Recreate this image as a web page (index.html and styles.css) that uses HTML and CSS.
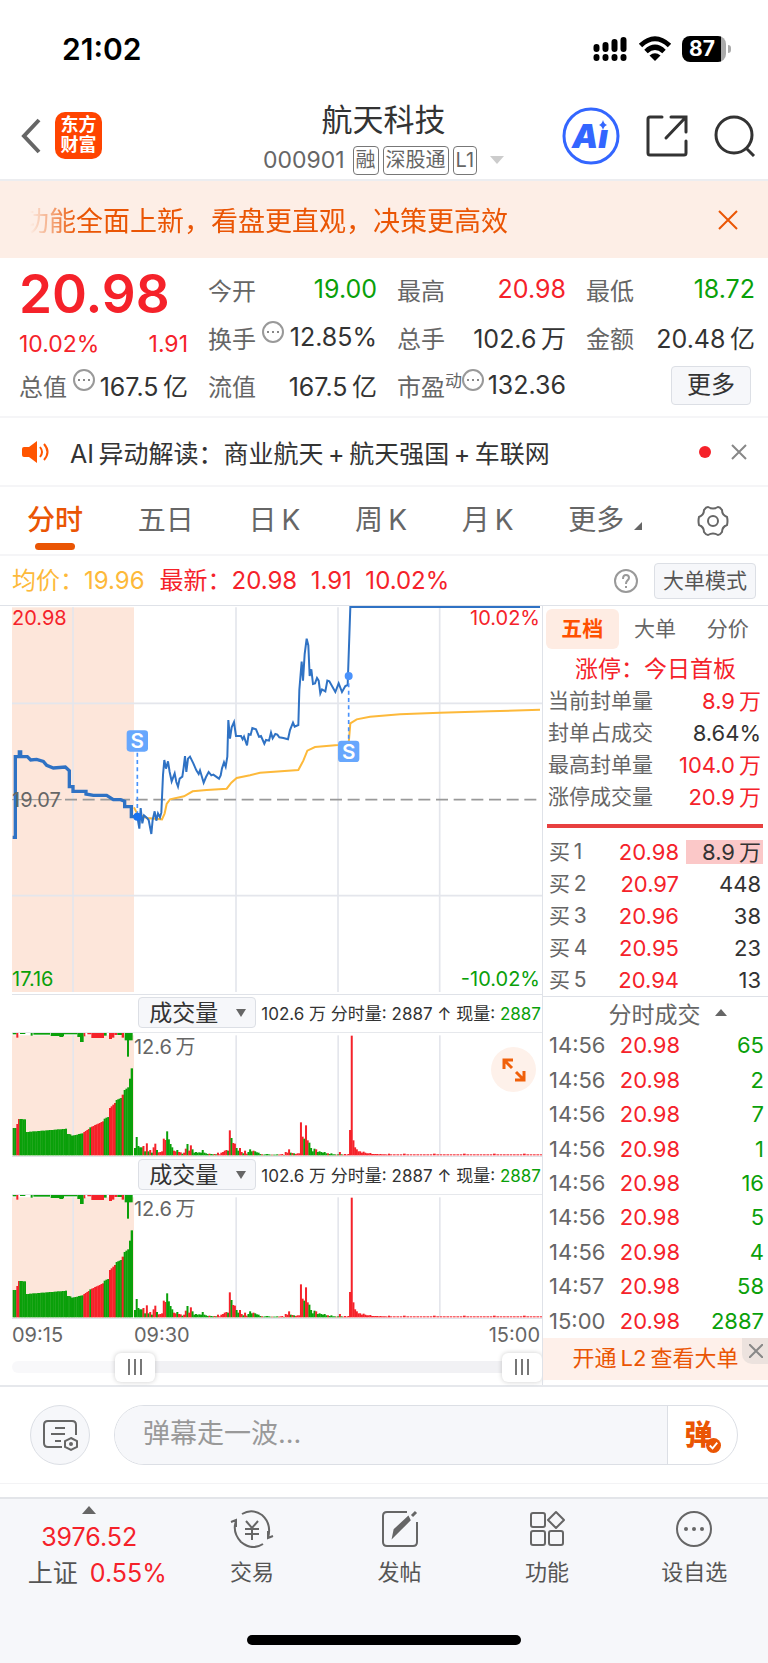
FILE: index.html
```
<!DOCTYPE html>
<html lang="zh-CN">
<head>
    <title>航天科技 000901</title>
    <meta charset="UTF-8">
    <meta name="viewport" content="width=device-width, initial-scale=1.0">
    <link rel="stylesheet" href="styles.css">
</head>
<body>
    <div class="status-bar">
        <span class="clock">21:02</span>
        <div class="status-icons">
            <svg width="35" height="26" viewBox="0 0 35 26">
                <g stroke="#000" stroke-width="6" stroke-linecap="round">
                    <path d="M3.500 11v2M12.500 9v4M21.500 6v7M30.500 4v9"/>
                    <path d="M3.500 21v1M12.500 21v1M21.500 21v1M30.500 21v1"/>
                </g>
            </svg>
            <svg width="34" height="26" viewBox="0 0 34 26">
                <g fill="none" stroke="#000" stroke-width="5">
                    <path d="M2.500 9.500Q17-4 31.500 9.500"/>
                    <path d="M8 15.500Q17 7 26 15.500"/>
                </g>
                <path d="M17 25l-5.500-5.500Q17 15 22.500 19.500z"/>
            </svg>
            <div class="battery">87</div>
        </div>
    </div>

    <header class="header">
        <a href="#" class="back" aria-label="返回">
            <svg width="20" height="36" viewBox="0 0 20 36"><path d="M18 2L3 18l15 16" fill="none" stroke="#666" stroke-width="4"/></svg>
        </a>
        <a href="#" class="logo">东方<br>财富</a>
        <div class="title">
            <h1>航天科技</h1>
            <div class="subtitle">
                <span class="code">000901</span>
                <span class="tag">融</span>
                <span class="tag">深股通</span>
                <span class="tag">L1</span>
                <svg class="caret" width="14" height="8" viewBox="0 0 14 8"><path d="M0 0h14L7 8z" fill="#ccc"/></svg>
            </div>
        </div>
        <button class="icon-btn" aria-label="AI">
            <svg width="58" height="58" viewBox="0 0 58 58">
                <circle cx="29" cy="29" r="27" fill="none" stroke="#3366ff" stroke-width="3"/>
                <text class="ai-mark" x="10" y="41">Aı</text>
                <path d="M41 13q1 4 4 5q-3 1-4 5q-1-4-4-5q3-1 4-5z" fill="#3366ff"/>
            </svg>
        </button>
        <button class="icon-btn" aria-label="分享">
            <svg width="42" height="42" viewBox="0 0 42 42">
                <path d="M16 2H4q-2 0-2 2v34q0 2 2 2h34q2 0 2-2V26M25 2h15v15M39 3L20 23" fill="none" stroke="#333" stroke-width="3" stroke-linecap="round"/>
            </svg>
        </button>
        <button class="icon-btn" aria-label="搜索">
            <svg width="42" height="42" viewBox="0 0 42 42">
                <circle cx="20" cy="20" r="18" fill="none" stroke="#333" stroke-width="3"/>
                <path d="M32 33l8 8" stroke="#333" stroke-width="3"/>
            </svg>
        </button>
    </header>

    <div class="notice">
        <p class="notice-text">功能全面上新，看盘更直观，决策更高效</p>
        <button class="close" aria-label="关闭">
            <svg width="20" height="20" viewBox="0 0 20 20"><path d="M1 1l18 18M19 1L1 19" stroke="#ea5504" stroke-width="2"/></svg>
        </button>
    </div>

    <section class="quote">
        <div class="quote-main">
            <strong class="price">20.98</strong>
            <div class="change"><span>10.02%</span><span>1.91</span></div>
        </div>
        <div class="stat"><span>今开</span><b class="down">19.00</b></div>
        <div class="stat"><span>最高</span><b class="up">20.98</b></div>
        <div class="stat"><span>最低</span><b class="down">18.72</b></div>
        <div class="stat"><span>换手</span><svg class="info" width="22" height="22" viewBox="0 0 22 22"><use href="#dots"/></svg><b>12.85%</b></div>
        <div class="stat"><span>总手</span><b>102.6&thinsp;万</b></div>
        <div class="stat"><span>金额</span><b>20.48&thinsp;亿</b></div>
        <div class="stat"><span>总值</span><svg class="info" width="22" height="22" viewBox="0 0 22 22"><use href="#dots"/></svg><b>167.5&thinsp;亿</b></div>
        <div class="stat"><span>流值</span><b>167.5&thinsp;亿</b></div>
        <div class="stat"><span>市盈<sup>动</sup></span><svg class="info tight" width="22" height="22" viewBox="0 0 22 22"><use href="#dots"/></svg><b>132.36</b></div>
        <div class="stat stat-more"><button class="btn more-btn">更多</button></div>
    </section>

    <div class="ai-news">
        <svg width="28" height="24" viewBox="0 0 28 24">
            <path d="M2 7h5l8-6v22l-8-6H2q-2 0-2-2V9q0-2 2-2z" fill="#ff5500"/>
            <path d="M18 7q4 5 0 10M22 4q7 8 0 16" fill="none" stroke="#ff5500" stroke-width="2"/>
        </svg>
        <a href="#" class="ai-text">AI&thinsp;异动解读：商业航天&thinsp;+&thinsp;航天强国&thinsp;+&thinsp;车联网</a>
        <i class="dot"></i>
        <button class="close" aria-label="关闭">
            <svg width="16" height="16" viewBox="0 0 16 16"><path d="M1 1l14 14M15 1L1 15" stroke="#888" stroke-width="2"/></svg>
        </button>
    </div>

    <nav class="tabs">
        <a href="#" class="active">分时</a>
        <a href="#">五日</a>
        <a href="#">日&thinsp;K</a>
        <a href="#">周&thinsp;K</a>
        <a href="#">月&thinsp;K</a>
        <a href="#" class="tab-more">更多</a>
        <button class="icon-btn" aria-label="设置">
            <svg width="32" height="32" viewBox="0 0 32 32" fill="none" stroke="#666" stroke-width="2">
                <path d="M11 2q5 3 10 0q2 0 4 3q0 5 5 7q1 4 0 8q-5 2-5 7q-2 3-4 3q-5-3-10 0q-2 0-4-3q0-5-5-7q-1-4 0-8q5-2 5-7q2-3 4-3z"/>
                <circle cx="16" cy="16" r="5"/>
            </svg>
        </button>
    </nav>

    <div class="chart-head">
        <span class="avg">均价：19.96</span>
        <span class="up">最新：20.98&nbsp; 1.91&nbsp; 10.02%</span>
        <svg class="help" width="26" height="26" viewBox="0 0 26 26" fill="none" stroke="#999" stroke-width="2">
            <circle cx="13" cy="13" r="11"/>
            <path d="M10 11q0-4 3-4t3 3q0 1-2 3q-1 1-1 3M13 18v2"/>
        </svg>
        <button class="btn mode-btn">大单模式</button>
    </div>

    <main class="board">
        <div class="charts">
            <div class="plot">
                <svg class="price-chart" viewBox="36 48 1590 1164">
                    <rect x="36" y="52" width="366" height="1154" fill="#fde6da"/>
                    <g stroke="#e4e6ec" stroke-width="5">
                        <path d="M36 340H1626M36 917H1626"/>
                        <path d="M219 52V1206M708 52V1206M1014 52V1206M1319 52V1206"/>
                    </g>
                    <path d="M195 629H1620" stroke="#999" stroke-width="5" stroke-dasharray="36 17"/>
                    <path d="M36 629H185" stroke="#999" stroke-width="3"/>
                    <path d="M402 652L412 672L440 684L486 688L494 670L500 642L510 628L552 619L578 604L620 600L680 596L694 578L710 564L750 556L780 548L895 540L910 512L922 482L945 471L1014 465L1046 460L1051 400L1070 388L1110 380L1200 373L1319 368L1470 364L1620 359" fill="none" stroke="#fdb93a" stroke-width="6"/>
                    <path d="M38 742H46V500H58V486H62V500H82L92 510L110 508L130 514L140 526L160 534L196 531L208 542V590H219V604H258V612L280 616H320L340 629H362L374 634V650H394V680H412" fill="none" stroke="#2f72c4" stroke-width="10"/>
                    <path d="M412 680L418 716L422 654L427 700L432 676L441 684L446 690L454 732L458 690L464 664L469 692L474 670L480 682L484 668L489 555L493 510L498 536L504 514L509 546L515 574L524 550L529 576L534 590L539 566L547 560L551 532L555 498L559 546L564 506L570 500L580 520L589 541L596 552L600 541L611 578L618 561L626 546L634 556L640 554L657 566L662 556L666 535L672 517L677 530L682 500L685 390L690 446L695 412L702 396L708 438L723 438L728 448L732 440L741 466L746 432L752 434L757 414L768 418L777 440L783 438L793 461L798 450L807 452L813 428L818 445L826 432L832 434L838 442L850 444L864 448L870 420L879 398L884 410L895 405L898 300L905 215L909 272L914 192L920 146L925 166L929 258L934 238L939 282L945 280L951 264L956 272L961 310L966 298L976 304L982 272L988 274L1006 306L1016 280L1026 306L1036 288L1043 285L1051 51H1620" fill="none" stroke="#2f72c4" stroke-width="6"/>
                    <path d="M412 488V680M1046 258V455" stroke="#4a92fb" stroke-width="5" stroke-dasharray="12 10"/>
                    <circle cx="412" cy="680" r="12" fill="#1a73f0"/>
                    <circle cx="1046" cy="258" r="12" fill="#4a92fb"/>
                    <rect x="380" y="421" width="64" height="64" rx="10" fill="#67a7fd"/>
                    <rect x="1014" y="452" width="64" height="64" rx="10" fill="#67a7fd"/>
                    <g class="mark"><text x="412" y="475">S</text><text x="1046" y="506">S</text></g>
                </svg>
                <span class="label top-left up">20.98</span>
                <span class="label top-right up">10.02%</span>
                <span class="label mid-left">19.07</span>
                <span class="label bottom-left down">17.16</span>
                <span class="label bottom-right down">-10.02%</span>
            </div>

            <div class="vol-head">
                <div class="select"><select aria-label="副图指标一"><option>成交量</option></select></div>
                <span>102.6 万 分时量: 2887 ↑ 现量: <em class="down">2887</em></span>
            </div>
            <div class="plot vol">
                <svg class="vol-chart" viewBox="36 128 1590 369"></svg>
                <span class="label vol-max">12.6&thinsp;万</span>
                <button class="expand" aria-label="放大">
                    <svg width="24" height="24" viewBox="0 0 24 24" fill="none" stroke="#f0600a" stroke-width="3">
                        <path d="M2 11V2h9M2 2l8 8M22 13v9h-9M22 22l-8-8"/>
                    </svg>
                </button>
            </div>

            <div class="vol-head">
                <div class="select"><select aria-label="副图指标二"><option>成交量</option></select></div>
                <span>102.6 万 分时量: 2887 ↑ 现量: <em class="down">2887</em></span>
            </div>
            <div class="plot vol">
                <svg class="vol-chart" viewBox="36 128 1590 369"></svg>
                <span class="label vol-max">12.6&thinsp;万</span>
            </div>

            <div class="times"><span class="t-open">09:15</span><span>09:30</span><span class="t-close">15:00</span></div>
            <div class="range">
                <input type="range" min="0" max="100" value="21" aria-label="开始时间">
                <input type="range" min="0" max="100" value="100" aria-label="结束时间">
            </div>
        </div>

        <aside class="panel">
            <div class="panel-tabs">
                <button class="active">五档</button>
                <button>大单</button>
                <button>分价</button>
            </div>
            <p class="limit">涨停：今日首板</p>
            <dl class="seal">
                <div><dt>当前封单量</dt><dd class="up">8.9&thinsp;万</dd></div>
                <div><dt>封单占成交</dt><dd>8.64%</dd></div>
                <div><dt>最高封单量</dt><dd class="up">104.0&thinsp;万</dd></div>
                <div><dt>涨停成交量</dt><dd class="up">20.9&thinsp;万</dd></div>
            </dl>
            <table class="bids">
                <tr><th>买&thinsp;1</th><td class="up">20.98</td><td><span class="hit">8.9&thinsp;万</span></td></tr>
                <tr><th>买&thinsp;2</th><td class="up">20.97</td><td>448</td></tr>
                <tr><th>买&thinsp;3</th><td class="up">20.96</td><td>38</td></tr>
                <tr><th>买&thinsp;4</th><td class="up">20.95</td><td>23</td></tr>
                <tr><th>买&thinsp;5</th><td class="up">20.94</td><td>13</td></tr>
            </table>
            <button class="deals-title">分时成交
                <svg width="12" height="7" viewBox="0 0 12 7"><path d="M0 7h12L6 0z" fill="#666"/></svg>
            </button>
            <table class="deals">
                <tr><th>14:56</th><td class="up">20.98</td><td class="down">65</td></tr>
                <tr><th>14:56</th><td class="up">20.98</td><td class="down">2</td></tr>
                <tr><th>14:56</th><td class="up">20.98</td><td class="down">7</td></tr>
                <tr><th>14:56</th><td class="up">20.98</td><td class="down">1</td></tr>
                <tr><th>14:56</th><td class="up">20.98</td><td class="down">16</td></tr>
                <tr><th>14:56</th><td class="up">20.98</td><td class="down">5</td></tr>
                <tr><th>14:56</th><td class="up">20.98</td><td class="down">4</td></tr>
                <tr><th>14:57</th><td class="up">20.98</td><td class="down">58</td></tr>
                <tr><th>15:00</th><td class="up">20.98</td><td class="down">2887</td></tr>
            </table>
            <div class="l2">
                <a href="#">开通&thinsp;L2&thinsp;查看大单</a>
                <button class="l2-close" aria-label="关闭">
                    <svg width="14" height="14" viewBox="0 0 14 14"><path d="M0 0l14 14M14 0L0 14" stroke="#888" stroke-width="2"/></svg>
                </button>
            </div>
        </aside>
    </main>

    <form class="comment">
        <button type="button" class="round-btn" aria-label="弹幕设置">
            <svg width="36" height="33" viewBox="0 0 36 33" fill="none" stroke="#666" stroke-width="2">
                <path d="M20 28H6q-4 0-4-4V6q0-4 4-4h24q4 0 4 4v10"/>
                <path d="M13 9h10M9 15h14M13 22h6"/>
                <path d="M29 19l6 3v6l-6 3l-6-3v-6z"/>
                <circle cx="29" cy="25" r="1"/>
            </svg>
        </button>
        <div class="comment-box">
            <input type="text" placeholder="弹幕走一波..." aria-label="弹幕">
            <button type="button" class="danmu">弹
                <svg width="15" height="15" viewBox="0 0 16 16"><circle cx="8" cy="8" r="8" fill="#ea5504"/><path d="M4 8l3 3l5-6" fill="none" stroke="#fff" stroke-width="2"/></svg>
            </button>
        </div>
    </form>

    <footer class="bottom-bar">
        <a href="#" class="index">
            <svg width="14" height="8" viewBox="0 0 14 8"><path d="M0 8h14L7 0z" fill="#666"/></svg>
            <span class="index-value up">3976.52</span>
            <span class="index-name">上证<em class="up">0.55%</em></span>
        </a>
        <a href="#">
            <svg width="44" height="38" viewBox="0 0 44 38" fill="none" stroke="#666" stroke-width="2">
                <path d="M12 4Q22-2 32 5Q42 14 38 28M33 34Q22 41 11 32Q2 22 6 11M1 12l5-2v7M43 26l-5 2v-7"/>
                <path d="M16 11l6 7l6-7M22 18v12M15 19h14M15 24h14"/>
            </svg>
            <span>交易</span>
        </a>
        <a href="#">
            <svg width="38" height="38" viewBox="0 0 38 38" fill="none" stroke="#666" stroke-width="2">
                <path d="M26 2H6Q2 2 2 6v26q0 4 4 4h26q4 0 4-4V12"/>
                <path d="M28 10L18 20l-5 5l1-5L27 8zM31 6l4-4" fill="#666" stroke-width="3"/>
            </svg>
            <span>发帖</span>
        </a>
        <a href="#">
            <svg width="36" height="38" viewBox="0 0 36 38" fill="none" stroke="#666" stroke-width="2">
                <rect x="2" y="3" width="14" height="14" rx="2"/>
                <rect x="2" y="21" width="14" height="14" rx="2"/>
                <rect x="20" y="21" width="14" height="14" rx="2"/>
                <path d="M27 2l8 8l-8 8l-8-8z" stroke-linejoin="round"/>
            </svg>
            <span>功能</span>
        </a>
        <a href="#">
            <svg width="38" height="38" viewBox="0 0 38 38">
                <circle cx="19" cy="19" r="17" fill="none" stroke="#666" stroke-width="2"/>
                <g fill="#666"><circle cx="11" cy="19" r="2"/><circle cx="19" cy="19" r="2"/><circle cx="27" cy="19" r="2"/></g>
            </svg>
            <span>设自选</span>
        </a>
        <div class="home-indicator"></div>
    </footer>

    <svg class="defs" width="0" height="0">
        <symbol id="dots" viewBox="0 0 22 22">
            <circle cx="11" cy="11" r="10" fill="none" stroke="#999" stroke-width="2"/>
            <path d="M5 10h2v2H5zM10 10h2v2h-2zM15 10h2v2h-2z" fill="#888"/>
        </symbol>
    </svg>
    <script src="chart.js"></script>
</body>
</html>
```
FILE: styles.css
```
* {
    box-sizing: border-box;
}

body {
    font-family: Inter, "Noto Sans CJK SC", sans-serif;
    margin: 0;
    color: #333;
    background-color: #fff;
}

button {
    font-family: inherit;
    color: inherit;
    padding: 0;
    border: none;
    background: none;
    cursor: pointer;
}

a {
    color: inherit;
    text-decoration: none;
}

svg {
    display: block;
    flex-shrink: 0;
}

em, i, b {
    font-style: normal;
    font-weight: 400;
}

.up {
    color: #f5222a;
}

.down {
    color: #0aa00a;
}

.defs {
    position: absolute;
}

.btn {
    background-color: #f6f7fa;
    border: 1px solid #dcdfe5;
    border-radius: 4px;
}

/* 状态栏 */
.status-bar {
    height: 90px;
    padding: 8px 42px 0 62px;
    display: flex;
    align-items: center;
    justify-content: space-between;
}

.clock {
    font-size: 30px;
    font-weight: 600;
    color: #000;
}

.status-icons {
    display: flex;
    align-items: center;
    gap: 10px;
}

.battery {
    position: relative;
    width: 44px;
    height: 26px;
    padding-right: 4px;
    border-radius: 8px;
    background: linear-gradient(90deg, #000 39px, #aaa 39px);
    color: #fff;
    font-size: 21px;
    font-weight: 700;
    line-height: 26px;
    text-align: center;
}

.battery::after {
    content: "";
    position: absolute;
    right: -5px;
    top: 9px;
    width: 3px;
    height: 8px;
    border-radius: 0 4px 4px 0;
    background-color: #aaa;
}

/* 标题栏 */
.header {
    height: 91px;
    padding: 2px 12px 0 21px;
    display: flex;
    align-items: center;
    border-bottom: 2px solid #ecedf0;
}

.logo {
    width: 47px;
    height: 47px;
    margin-left: 14px;
    padding-top: 3px;
    border-radius: 10px;
    background-color: #ff4400;
    color: #fff;
    font-size: 18px;
    font-weight: 700;
    line-height: 20px;
    text-align: center;
}

.title {
    flex: 1;
    padding: 3px 0 0 103px;
    display: flex;
    flex-direction: column;
    align-items: center;
}

.title h1 {
    margin: 0;
    font-size: 31px;
    font-weight: 400;
    line-height: 46px;
}

.subtitle {
    display: flex;
    align-items: center;
    gap: 4px;
    height: 35px;
    color: #666;
}

.code {
    font-size: 23px;
    margin-right: 4px;
}

.tag {
    height: 29px;
    padding: 0 2px;
    border: 1px solid #777;
    border-radius: 4px;
    font-size: 20px;
    line-height: 27px;
}

.caret {
    margin-left: 9px;
}

.ai-mark {
    fill: #3366ff;
    font-size: 33px;
    font-style: italic;
    font-weight: 900;
}

.header .icon-btn {
    margin-left: 26px;
}

.header .icon-btn:first-of-type {
    margin-left: 0;
}

/* 通知 */
.notice {
    height: 77px;
    padding: 0 30px 0 22px;
    display: flex;
    align-items: center;
    justify-content: space-between;
    background-color: #fdeee6;
}

.notice-text {
    margin: 0;
    font-size: 27px;
    color: #ea5504;
    mask-image: linear-gradient(90deg, transparent 8px, #000 54px);
}

/* 行情 */
.quote {
    display: grid;
    grid-template-columns: repeat(4, 1fr);
    grid-auto-rows: 48px;
    column-gap: 20px;
    padding: 7px 13px 7px 19px;
    border-bottom: 2px solid #f5f5f7;
}

.quote-main {
    grid-row: span 2;
    color: #f5222a;
}

.price {
    display: block;
    font-size: 53px;
    font-weight: 600;
    line-height: 58px;
}

.change {
    display: flex;
    justify-content: space-between;
    font-size: 23px;
    line-height: 42px;
}

.stat {
    display: flex;
    align-items: center;
    font-size: 24px;
    white-space: nowrap;
}

.stat span {
    color: #666;
}

.stat b {
    margin-left: auto;
    font-size: 25px;
}

.stat sup {
    font-size: 17px;
    line-height: 18px;
}

.info {
    margin: 0 0 10px 6px;
}

.info.tight {
    margin-left: 0;
}

.stat-more {
    justify-content: flex-end;
    padding-right: 4px;
}

.more-btn {
    width: 80px;
    height: 39px;
    font-size: 24px;
    line-height: 36px;
}

/* AI 解读 */
.ai-news {
    height: 69px;
    padding: 0 21px 0 22px;
    display: flex;
    align-items: center;
    border-bottom: 2px solid #f5f5f7;
}

.ai-text {
    flex: 1;
    margin-left: 20px;
    font-size: 25px;
}

.dot {
    width: 12px;
    height: 12px;
    margin-right: 20px;
    border-radius: 50%;
    background-color: #f5222a;
}

/* 周期 */
.tabs {
    height: 69px;
    padding: 0 39px 0 27px;
    display: flex;
    align-items: center;
    justify-content: space-between;
    border-bottom: 2px solid #f5f5f7;
    font-size: 28px;
    line-height: 67px;
    color: #666;
}

.tabs .active {
    position: relative;
    color: #ea5504;
    font-weight: 500;
}

.tabs .active::after {
    content: "";
    position: absolute;
    left: 50%;
    bottom: 4px;
    width: 40px;
    height: 7px;
    margin-left: -20px;
    border-radius: 4px;
    background-color: #ea5504;
}

.tab-more::after {
    content: "";
    display: inline-block;
    margin-left: 10px;
    border: 4px solid;
    border-color: transparent #666 #666 transparent;
}

.chart-head {
    height: 49px;
    padding: 0 12px;
    display: flex;
    align-items: center;
    gap: 15px;
    font-size: 24px;
    line-height: 46px;
    white-space: nowrap;
}

.avg {
    color: #fdb93a;
}

.help {
    margin-left: auto;
}

.mode-btn {
    width: 102px;
    height: 36px;
    font-size: 21px;
    line-height: 32px;
    color: #555;
}

/* 图表 */
.board {
    display: flex;
    border-top: 1px solid #dfe2e8;
    border-bottom: 2px solid #e6e8ec;
}

.charts {
    flex: 1;
    min-width: 0;
    padding-left: 12px;
}

.plot {
    position: relative;
    border-bottom: 1px solid #dfe2e8;
}

.plot svg {
    width: 100%;
}

.plot .expand svg {
    width: 24px;
}

.mark text {
    fill: #fff;
    font-size: 62px;
    font-weight: 600;
    text-anchor: middle;
}

.label {
    position: absolute;
    font-size: 20px;
    line-height: 24px;
}

.top-left {
    top: 0;
    left: 0;
}

.top-right {
    top: 0;
    right: 2px;
}

.mid-left {
    top: 50%;
    left: 0;
    margin-top: -12px;
    color: #666;
}

.bottom-left {
    bottom: 3px;
    left: 0;
}

.bottom-right {
    bottom: 3px;
    right: 2px;
}

.vol-max {
    top: 2px;
    left: 23%;
    color: #666;
}

.expand {
    position: absolute;
    top: 14px;
    right: 6px;
    width: 45px;
    height: 45px;
    display: flex;
    align-items: center;
    justify-content: center;
    border-radius: 50%;
    background-color: #fef1ea;
}

.vol-head {
    height: 38px;
    padding: 0 1px 2px 0;
    display: flex;
    align-items: center;
    justify-content: flex-end;
    gap: 5px;
    border-bottom: 1px solid #e6e8ec;
    font-size: 17px;
    white-space: nowrap;
}

.select {
    position: relative;
}

.select select {
    appearance: none;
    width: 118px;
    height: 31px;
    padding: 0 0 0 10px;
    background-color: #f6f7fa;
    border: 1px solid #dcdfe5;
    border-radius: 4px;
    font-family: inherit;
    font-size: 23px;
    color: #333;
}

.select::after {
    content: "";
    position: absolute;
    top: 12px;
    right: 10px;
    border: 5px solid transparent;
    border-top: 8px solid #666;
    border-bottom: none;
}

.times {
    display: flex;
    height: 32px;
    font-size: 20px;
    line-height: 32px;
    color: #666;
}

.t-open {
    width: 23%;
}

.t-close {
    margin-left: auto;
    padding-right: 2px;
}

.range {
    display: grid;
    height: 34px;
}

.range input {
    grid-area: 1 / 1;
    appearance: none;
    width: 100%;
    height: 32px;
    margin: 0;
    background: none;
    pointer-events: none;
}

.range input:first-child::-webkit-slider-runnable-track {
    height: 12px;
    border-radius: 6px;
    background: linear-gradient(90deg, #f8f8fa 23%, #f1f1f4 23%);
}

.range input::-webkit-slider-thumb {
    appearance: none;
    width: 40px;
    height: 29px;
    border-radius: 6px;
    box-shadow: 0 0 5px rgba(0, 0, 0, 0.2);
    background: repeating-linear-gradient(90deg, #777 0 2px, transparent 2px 6px) 13px 6px / 14px 16px no-repeat #fff;
    pointer-events: auto;
}

.range input:first-child::-webkit-slider-thumb {
    margin-top: -8px;
}

/* 盘口 */
.panel {
    width: 226px;
    display: flex;
    flex-direction: column;
    border-left: 1px solid #dfe2e8;
    font-size: 22px;
}

.panel-tabs {
    display: flex;
    padding: 3px 4px 4px 3px;
}

.panel-tabs button {
    flex: 1;
    height: 40px;
    border-radius: 6px;
    font-size: 21px;
    line-height: 36px;
    color: #666;
}

.panel-tabs .active {
    background-color: #feece3;
    color: #ff5000;
    font-weight: 700;
}

.limit {
    margin: 0;
    font-size: 23px;
    line-height: 32px;
    text-align: center;
    color: #f5222a;
}

.seal {
    margin: 0 5px 0 4px;
    padding-bottom: 11px;
    border-bottom: 4px solid #e84040;
}

.seal div {
    display: flex;
    justify-content: space-between;
    padding: 0 2px 0 1px;
    line-height: 32px;
}

.seal dt {
    font-size: 21px;
    color: #666;
}

.seal dd {
    margin: 0;
}

.panel table {
    border-collapse: collapse;
    margin: 0 5px 0 4px;
    line-height: 32px;
}

.panel th {
    padding: 0 0 0 2px;
    font-weight: 400;
    text-align: left;
    color: #666;
}

.panel td {
    padding: 0;
    text-align: right;
}

.panel td:last-child {
    width: 84px;
}

.bids th {
    font-size: 21px;
}

.panel .bids {
    margin-top: 8px;
}

.bids td:last-child {
    padding-right: 2px;
}

.hit {
    display: block;
    margin: 0 -2px 0 7px;
    padding-right: 2px;
    line-height: 24px;
    background-color: #fbc8c8;
}

.deals-title {
    display: flex;
    align-items: center;
    justify-content: center;
    gap: 14px;
    height: 32px;
    padding-left: 24px;
    border-top: 1px solid #dfe2e8;
    font-size: 23px;
    color: #666;
}

.panel .deals {
    flex: 1;
    margin-right: 4px;
}

.l2 {
    position: relative;
    height: 42px;
    margin-bottom: 5px;
    background-color: #fef0ea;
    color: #ea5504;
    line-height: 40px;
    text-align: center;
}

.l2-close {
    position: absolute;
    top: 0;
    right: 0;
    width: 26px;
    height: 26px;
    padding-left: 7px;
    border-radius: 0 0 0 10px;
    background-color: #ece2de;
}

/* 弹幕 */
.comment {
    display: flex;
    gap: 24px;
    padding: 18px 30px;
    border-bottom: 1px solid #f3f3f5;
}

.round-btn {
    width: 60px;
    height: 60px;
    padding-left: 11px;
    border: 1px solid #dcdfe5;
    border-radius: 50%;
    background-color: #f6f7fa;
}

.comment-box {
    flex: 1;
    display: flex;
    height: 60px;
    border: 1px solid #dcdfe5;
    border-radius: 30px;
    overflow: hidden;
}

.comment-box input {
    flex: 1;
    min-width: 0;
    padding: 0 0 4px 28px;
    border: none;
    background-color: #f6f7fa;
    font-family: inherit;
    font-size: 27px;
}

.comment-box input::placeholder {
    color: #999;
}

.danmu {
    position: relative;
    width: 70px;
    border-left: 1px solid #dcdfe5;
    padding: 0 8px 4px 0;
    font-size: 28px;
    font-weight: 900;
    color: #ea5504;
}

.danmu svg {
    position: absolute;
    right: 16px;
    bottom: 11px;
}

/* 底部 */
.bottom-bar {
    display: grid;
    grid-template-columns: 23fr repeat(4, 19fr);
    grid-template-rows: 124px 1fr;
    height: 166px;
    margin-top: 13px;
    border-top: 2px solid #e3e5e9;
    background-color: #f6f7fa;
}

.bottom-bar a {
    display: flex;
    flex-direction: column;
    align-items: center;
    padding-top: 11px;
    font-size: 22px;
    line-height: 40px;
    color: #555;
}

.bottom-bar a > svg {
    margin-bottom: 4px;
}

.bottom-bar .index {
    padding-top: 7px;
    font-size: 25px;
}

.bottom-bar .index svg {
    margin-bottom: 2px;
}

.index-value {
    line-height: 42px;
}

.index-name {
    padding-left: 16px;
    line-height: 30px;
}

.index-name em {
    margin-left: 12px;
}

.home-indicator {
    grid-column: 1 / -1;
    justify-self: center;
    width: 274px;
    height: 10px;
    margin-top: 12px;
    border-radius: 5px;
    background-color: #000;
}
```
FILE: chart.js
```
const RED = '#f5222a';
const GREEN = '#0aa00a';
const BASE = 495;

// 集合竞价：起点, 终点, 起始高度, 结束高度, 颜色
const auction = [
    [38, 49, 82, 82, GREEN], [49, 54, 94, 94, RED], [54, 58, 109, 109, RED],
    [58, 77, 109, 107, GREEN], [77, 200, 70, 80, GREEN], [200, 213, 64, 63, GREEN],
    [213, 250, 59, 67, GREEN], [250, 268, 70, 82, RED], [268, 273, 84, 84, GREEN],
    [273, 311, 86, 104, RED], [311, 327, 110, 118, GREEN], [327, 347, 142, 162, RED],
    [347, 365, 166, 174, GREEN], [365, 371, 182, 182, RED], [371, 387, 196, 208, GREEN],
    [387, 392, 230, 230, GREEN], [392, 398, 261, 261, GREEN]
];

// 未匹配量，自上而下
const unmatched = [
    [38, 50, 4, GREEN], [49, 55, 14, RED], [60, 76, 3, GREEN], [92, 98, 8, GREEN],
    [100, 150, 5, GREEN], [152, 192, 9, GREEN], [178, 190, 12, GREEN], [192, 232, 4, GREEN],
    [232, 242, 12, GREEN], [240, 251, 27, GREEN], [251, 256, 10, RED], [262, 274, 4, RED],
    [274, 312, 15, RED], [312, 320, 8, GREEN], [327, 336, 18, RED], [336, 343, 14, RED],
    [343, 352, 6, RED], [352, 366, 6, GREEN], [365, 372, 14, RED], [374, 398, 22, GREEN],
    [381, 387, 71, GREEN]
];

// 盘中每分钟：高度 + 颜色
const minutes = [
    '22g 55g 28g 24g 24g 28r 12g 36r 12g 16r 8g 24r 35r 16g 9r 10r 12r 50r 46r',
    '72g 48g 34g 24g 14r 12r 16g 10r 9r 5g 8r 20r 34g 14r 30r 18g 8g 10g 8g 9g 8g',
    '16g 8g 6g 4g 5r 4g 3g 4r 3g 8r 3r 8r 10r 14r 16r 14g',
    '75r 52g 37r 35r 22g 14g 22r 10r 6g 14r 5r 10g 18g 12g 14r 12g 9g 8g 4g',
    '3r 2g 3g 4g 3g 2g 2r 2g 2g 3g 2r 3r 4r 1g 10r 8r 18r 8g 7r 6g 4r 6r 6r',
    '99r 56r 50g 90r 45r 38g 22g 12g 20g 18r 10g 12g 10g 8g 10g 6g 6r 4g 6g',
    '3g 3g 2r 3g 10r 3g 2r 4r 2r 4r 76r 359r 45r 24r 18r 12r 12r 8r 11r 8r',
    '6r 6r 7r 4r 4r 4r 4r 3r 4r 3r 3r 3r 2r 5r'
].join(' ').split(' ');

const STEP = 5.08;

const rect = (x, y, w, h, fill) =>
    `<rect x="${x}" y="${y}" width="${w}" height="${h}" fill="${fill}"/>`;

function drawVolume(svg) {
    let out = rect(36, 135, 366, 360, '#fde6da');
    [219, 708, 1014, 1319].forEach(x => {
        out += rect(x - 2, 135, 5, 360, '#e4e6ec');
    });

    auction.forEach(([from, to, h0, h1, color]) => {
        const n = Math.max(1, Math.round((to - from) / 5));
        const w = (to - from) / n;
        for (let i = 0; i < n; i++) {
            const h = Math.round(h0 + (h1 - h0) * i / n);
            out += rect(from + i * w, BASE - h, w + 1, h, color);
        }
    });

    unmatched.forEach(([from, to, h, color]) => {
        out += rect(from, 128, to - from, h, color);
    });

    minutes.forEach((bar, i) => {
        const h = parseInt(bar, 10);
        out += rect(402 + i * STEP, BASE - h, 6, h, bar.endsWith('r') ? RED : GREEN);
    });

    // 封板后成交稀少
    for (let x = 402 + minutes.length * STEP, i = 0; x < 1620; x += 10, i++) {
        const h = i % 9 === 4 ? 5 : 3;
        out += rect(x, BASE - h, 8, h, RED);
    }

    svg.innerHTML = out;
}

document.querySelectorAll('.vol-chart').forEach(drawVolume);
```
